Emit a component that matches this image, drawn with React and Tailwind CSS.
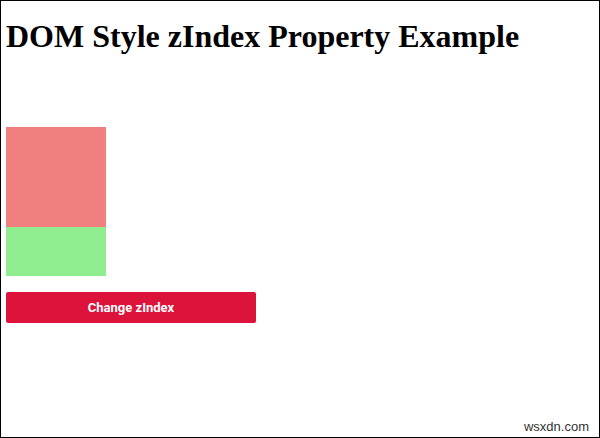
import React, { useState } from 'react';

const App = () => {
  const [redOnTop, setRedOnTop] = useState(true);

  return (
    <div className="relative w-[600px] h-[438px] border border-black bg-white overflow-hidden">
      <div className="pl-[5px] pt-[6px]">
        <h1 className="text-[32px] leading-[37px] font-bold text-black font-['Liberation_Serif','Times_New_Roman',serif] mt-[11px]">
          DOM Style zIndex Property Example
        </h1>

        <div className="relative mt-[72px] w-[100px] h-[149px]">
          <div className={`absolute top-0 left-0 w-[100px] h-[100px] bg-[#f08080] ${redOnTop ? 'z-10' : 'z-0'}`} />
          <div className="absolute top-[49px] left-0 w-[100px] h-[100px] bg-[#90ee90] z-[5]" />
        </div>

        <button
          onClick={() => setRedOnTop(!redOnTop)}
          className="mt-[16px] w-[250px] h-[31px] rounded-[2px] bg-[#dc143c] text-white text-[13px] font-bold font-['Roboto','Liberation_Sans',sans-serif]"
        >
          Change zIndex
        </button>
      </div>

      <span className="absolute right-[10px] bottom-[1px] text-[13px] text-[#333] font-['Liberation_Sans',Arial,sans-serif]">
        wsxdn.com
      </span>
    </div>
  );
};

export default App;
